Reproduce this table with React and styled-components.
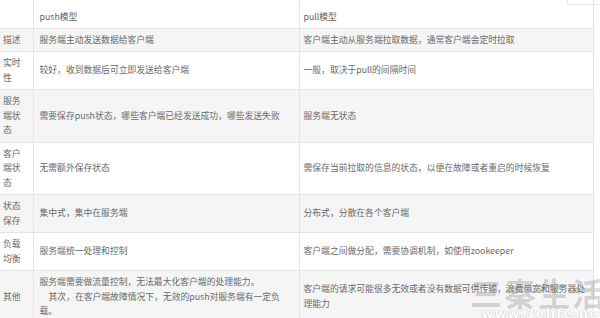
import React from 'react';
import styled, { createGlobalStyle } from 'styled-components';

const GlobalStyle = createGlobalStyle`
    html, body {
        margin: 0;
        padding: 0;
        background: #ffffff;
        overflow: hidden;
    }
`;

const Page = styled.div`
    position: relative;
    width: 600px;
    height: 318px;
    overflow: hidden;
    font-family: "Noto Sans CJK SC", "Noto Sans", sans-serif;
    font-size: 8.8px;
    color: #6a6a6a;
`;

const Table = styled.table`
    border-collapse: collapse;
    table-layout: fixed;
    width: 593px;
    border-right: 1px solid #e6e6e6;
`;

const Row = styled.tr`
    background: ${p => (p.$shaded ? '#f5f5f5' : '#ffffff')};
    border-bottom: 1px solid #e4e4e4;
`;

const HeadRow = styled.tr`
    height: 28px;
    background: #ffffff;
    border-bottom: 1px solid #e4e4e4;
`;

const HeadCell = styled.th`
    text-align: left;
    font-weight: normal;
    color: #5e5e5e;
    padding: 6px 4px 0 ${p => p.$pad || 6}px;
    border-left: ${p => (p.$first ? 'none' : '1px solid #e6e6e6')};
`;

const LabelCell = styled.td`
    width: 24px;
    padding: 4px 5px 4px 3px;
    line-height: 14.5px;
    vertical-align: middle;
    word-break: break-all;
`;

const Cell = styled.td`
    padding: 4px ${p => p.$right ?? 6}px 4px ${p => p.$left || 6}px;
    line-height: 14.5px;
    vertical-align: middle;
    border-left: 1px solid #e6e6e6;
`;

const Indent = styled.span`
    display: inline-block;
    width: 9px;
`;

const CornerBox = styled.div`
    position: absolute;
    top: -1px;
    left: 567px;
    width: 32px;
    height: 5px;
    border: 1px solid #e8e8e8;
    border-top: none;
`;

const Watermark = styled.div`
    position: absolute;
    right: -6px;
    bottom: -3px;
    display: flex;
    flex-direction: column;
    align-items: flex-end;
    pointer-events: none;
`;

const MarkTitle = styled.div`
    font-size: 32px;
    font-weight: bold;
    letter-spacing: 2px;
    line-height: 30px;
    color: rgba(120, 120, 120, 0.28);
`;

const MarkUrl = styled.div`
    font-family: "DejaVu Sans", sans-serif;
    font-size: 13px;
    font-weight: bold;
    line-height: 14px;
    letter-spacing: 1px;
    color: #ffffff;
    text-shadow: 0 0 1px rgba(100, 100, 100, 0.6);
`;

const rows = [
    ['描述', '服务端主动发送数据给客户端', '客户端主动从服务端拉取数据，通常客户端会定时拉取'],
    ['实时性', '较好，收到数据后可立即发送给客户端', '一般，取决于pull的间隔时间'],
    ['服务端状态', '需要保存push状态，哪些客户端已经发送成功，哪些发送失败', '服务端无状态'],
    ['客户端状态', '无需额外保存状态', '需保存当前拉取的信息的状态，以便在故障或者重启的时候恢复'],
    ['状态保存', '集中式，集中在服务端', '分布式，分散在各个客户端'],
    ['负载均衡', '服务端统一处理和控制', '客户端之间做分配，需要协调机制，如使用zookeeper'],
];

function App() {
    return (
        <Page>
            <GlobalStyle />
            <Table>
                <colgroup>
                    <col style={{ width: 33 }} />
                    <col style={{ width: 266 }} />
                    <col style={{ width: 294 }} />
                </colgroup>
                <thead>
                    <HeadRow>
                        <HeadCell $first />
                        <HeadCell>push模型</HeadCell>
                        <HeadCell $pad={4}>pull模型</HeadCell>
                    </HeadRow>
                </thead>
                <tbody>
                    {rows.map((r, i) => (
                        <Row key={r[0]} $shaded={i % 2 === 0}>
                            <LabelCell>{r[0]}</LabelCell>
                            <Cell>{r[1]}</Cell>
                            <Cell $left={4}>{r[2]}</Cell>
                        </Row>
                    ))}
                    <Row $shaded>
                        <LabelCell>其他</LabelCell>
                        <Cell>
                            服务端需要做流量控制，无法最大化客户端的处理能力。<br />
                            <Indent />其次，在客户端故障情况下，无效的push对服务端有一定负载。
                        </Cell>
                        <Cell $left={4} $right={0}>
                            客户端的请求可能很多无效或者没有数据可供传输，浪费带宽和服务器处理能力
                        </Cell>
                    </Row>
                </tbody>
            </Table>
            <CornerBox />
            <Watermark>
                <MarkTitle>三秦生活</MarkTitle>
                <MarkUrl>www.3elife.net</MarkUrl>
            </Watermark>
        </Page>
    );
}

export default App;
